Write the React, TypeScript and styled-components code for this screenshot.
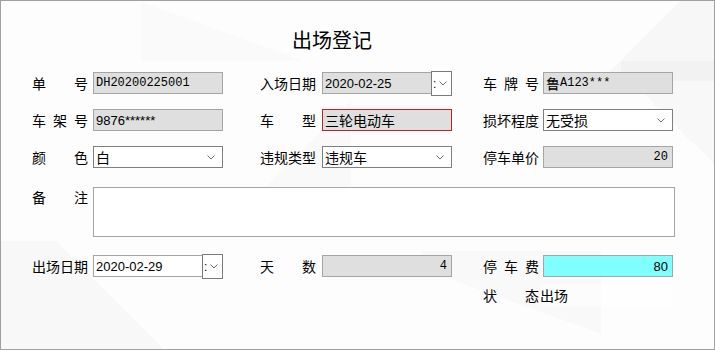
import styled, { createGlobalStyle } from "styled-components";

const CJK = `"Noto Sans CJK SC", "Noto Sans", sans-serif`;
const MONO = `"Liberation Mono", "Noto Sans CJK SC", monospace`;
const SANS = `"Liberation Sans", "Noto Sans CJK SC", sans-serif`;

const GlobalStyle = createGlobalStyle`
  html, body { margin: 0; padding: 0; background: #fff; }
  body { font-family: ${CJK}; color: #000; }
`;

const Chevron = () => (
  <svg width="8" height="5" viewBox="0 0 8 5">
    <polyline points="0.5,0.5 4,4 7.5,0.5" fill="none" stroke="#707070" strokeWidth="1" />
  </svg>
);

const Lbl = ({ text }: { text: string }) => (
  <Label>
    {text.split("").map((c, i) => (
      <span key={i}>{c}</span>
    ))}
  </Label>
);

const DatePicker = ({ value, bg }: { value: string; bg: string }) => (
  <DateWrap>
    <DateField $bg={bg}>
      <Sans>{value}</Sans>
    </DateField>
    <DateButton>
      <Colon>:</Colon>
      <Chevron />
    </DateButton>
  </DateWrap>
);

const App: React.FC = () => {
  return (
    <>
      <GlobalStyle />
      <Window>
        <Title>出场登记</Title>
        <Row $mt={20}>
          <Field>
            <Lbl text="单号" />
            <TextBox $bg="#dfdfdf">
              <Mono>DH20200225001</Mono>
            </TextBox>
          </Field>
          <Field $gap={6}>
            <Lbl text="入场日期" />
            <DatePicker value="2020-02-25" bg="#dfdfdf" />
          </Field>
          <Field $gap={4}>
            <Lbl text="车牌号" />
            <TextBox $bg="#dfdfdf">
              <Han>鲁</Han>
              <Mono>A123***</Mono>
            </TextBox>
          </Field>
        </Row>
        <Row $mt={15}>
          <Field>
            <Lbl text="车架号" />
            <TextBox $bg="#dfdfdf">
              <Sans>9876******</Sans>
            </TextBox>
          </Field>
          <Field $gap={6}>
            <Lbl text="车型" />
            <TextBox $bg="#dfdfdf" $border="#c42020">
              <Han>三轮电动车</Han>
            </TextBox>
          </Field>
          <Field $gap={4}>
            <Lbl text="损坏程度" />
            <Select>
              <Han>无受损</Han>
              <Chevron />
            </Select>
          </Field>
        </Row>
        <Row $mt={15}>
          <Field>
            <Lbl text="颜色" />
            <Select>
              <Han>白</Han>
              <Chevron />
            </Select>
          </Field>
          <Field $gap={6}>
            <Lbl text="违规类型" />
            <Select>
              <Han>违规车</Han>
              <Chevron />
            </Select>
          </Field>
          <Field $gap={4}>
            <Lbl text="停车单价" />
            <TextBox $bg="#dfdfdf" $align="flex-end">
              <Mono>20</Mono>
            </TextBox>
          </Field>
        </Row>
        <RemarkRow>
          <TopLabel>
            <Lbl text="备注" />
          </TopLabel>
          <TextArea />
        </RemarkRow>
        <Row $mt={18}>
          <Field>
            <Lbl text="出场日期" />
            <DatePicker value="2020-02-29" bg="#ffffff" />
          </Field>
          <Field $gap={6}>
            <Lbl text="天数" />
            <TextBox $bg="#dfdfdf" $align="flex-end">
              <Mono>4</Mono>
            </TextBox>
          </Field>
          <Field $gap={4}>
            <Lbl text="停车费" />
            <TextBox $bg="#80ffff" $align="flex-end">
              <Sans>80</Sans>
            </TextBox>
          </Field>
        </Row>
        <StatusRow>
          <Field $gap={1}>
            <Lbl text="状态" />
            <StatusValue>出场</StatusValue>
          </Field>
        </StatusRow>
      </Window>
    </>
  );
};

const Window = styled.div`
  width: 715px;
  height: 350px;
  box-sizing: border-box;
  border: 1px solid #a0a0a0;
  padding-left: 31px;
  display: flex;
  flex-direction: column;
  overflow: hidden;
  background-color: #fdfdfd;
  background-image:
    linear-gradient(135deg, transparent 50%, rgba(0, 0, 0, 0.025) 50%),
    linear-gradient(225deg, rgba(0, 0, 0, 0.02) 50%, transparent 50%),
    linear-gradient(45deg, rgba(0, 0, 0, 0.018) 50%, transparent 50%),
    linear-gradient(315deg, rgba(0, 0, 0, 0.015) 50%, transparent 50%),
    linear-gradient(200deg, rgba(0, 0, 0, 0.015) 50%, transparent 50%),
    linear-gradient(20deg, rgba(0, 0, 0, 0.01) 50%, transparent 50%);
  background-repeat: no-repeat;
  background-position:
    560px 0,
    620px 60px,
    0 240px,
    230px 100px,
    420px 250px,
    140px 0;
  background-size:
    160px 80px,
    100px 120px,
    220px 110px,
    120px 120px,
    180px 100px,
    160px 60px;
`;

const Title = styled.h1`
  margin: 27px 0 0 260px;
  font-family: ${CJK};
  font-size: 20px;
  font-weight: normal;
  line-height: 24px;
`;

const Row = styled.div<{ $mt: number }>`
  display: grid;
  grid-template-columns: 228px 223px 1fr;
  height: 22px;
  margin-top: ${(p) => p.$mt}px;
`;

const Field = styled.div<{ $gap?: number }>`
  display: flex;
  align-items: flex-start;
  gap: ${(p) => p.$gap ?? 5}px;
`;

const Label = styled.span`
  display: flex;
  justify-content: space-between;
  flex: none;
  width: 56px;
  font-family: ${CJK};
  font-size: 14px;
  line-height: 22px;
`;

const TopLabel = styled.div`
  margin-top: -1px;
`;

const TextBox = styled.div<{ $bg: string; $border?: string; $align?: string }>`
  width: 130px;
  height: 22px;
  box-sizing: border-box;
  border: 1px solid ${(p) => p.$border ?? "#a5a5a5"};
  background: ${(p) => p.$bg};
  display: flex;
  align-items: center;
  justify-content: ${(p) => p.$align ?? "flex-start"};
  padding: 0 4px 0 2px;
  white-space: nowrap;
`;

const Select = styled.div`
  width: 130px;
  height: 22px;
  box-sizing: border-box;
  border: 1px solid #7f7f7f;
  background: #fff;
  display: flex;
  align-items: center;
  justify-content: space-between;
  padding: 0 7px 0 2px;
`;

const DateWrap = styled.div`
  display: flex;
  align-items: flex-start;
`;

const DateField = styled.div<{ $bg: string }>`
  width: 109px;
  height: 22px;
  box-sizing: border-box;
  border: 1px solid #a5a5a5;
  border-right: none;
  background: ${(p) => p.$bg};
  display: flex;
  align-items: center;
  padding-left: 2px;
`;

const DateButton = styled.div`
  width: 21px;
  height: 25px;
  margin-top: -1px;
  box-sizing: border-box;
  border: 1px solid #7a7a7a;
  background: #fff;
  display: flex;
  align-items: center;
  gap: 3px;
  padding-left: 1px;
`;

const Colon = styled.span`
  font-family: ${SANS};
  font-size: 12px;
  line-height: 1;
`;

const Mono = styled.span`
  font-family: ${MONO};
  font-size: 12px;
`;

const Sans = styled.span`
  font-family: ${SANS};
  font-size: 13px;
`;

const Han = styled.span`
  font-family: ${CJK};
  font-size: 14px;
  line-height: 1;
`;

const RemarkRow = styled.div`
  display: flex;
  align-items: flex-start;
  gap: 5px;
  margin-top: 19px;
`;

const TextArea = styled.div`
  width: 582px;
  height: 50px;
  box-sizing: border-box;
  border: 1px solid #a5a5a5;
  background: #fff;
`;

const StatusRow = styled.div`
  display: grid;
  grid-template-columns: 228px 223px 1fr;
  margin-top: 7px;

  & > * {
    grid-column: 3;
  }
`;

const StatusValue = styled.span`
  width: 132px;
  font-family: ${CJK};
  font-size: 14px;
  line-height: 22px;
  background: rgba(255, 255, 255, 0.55);
`;

export default App;
